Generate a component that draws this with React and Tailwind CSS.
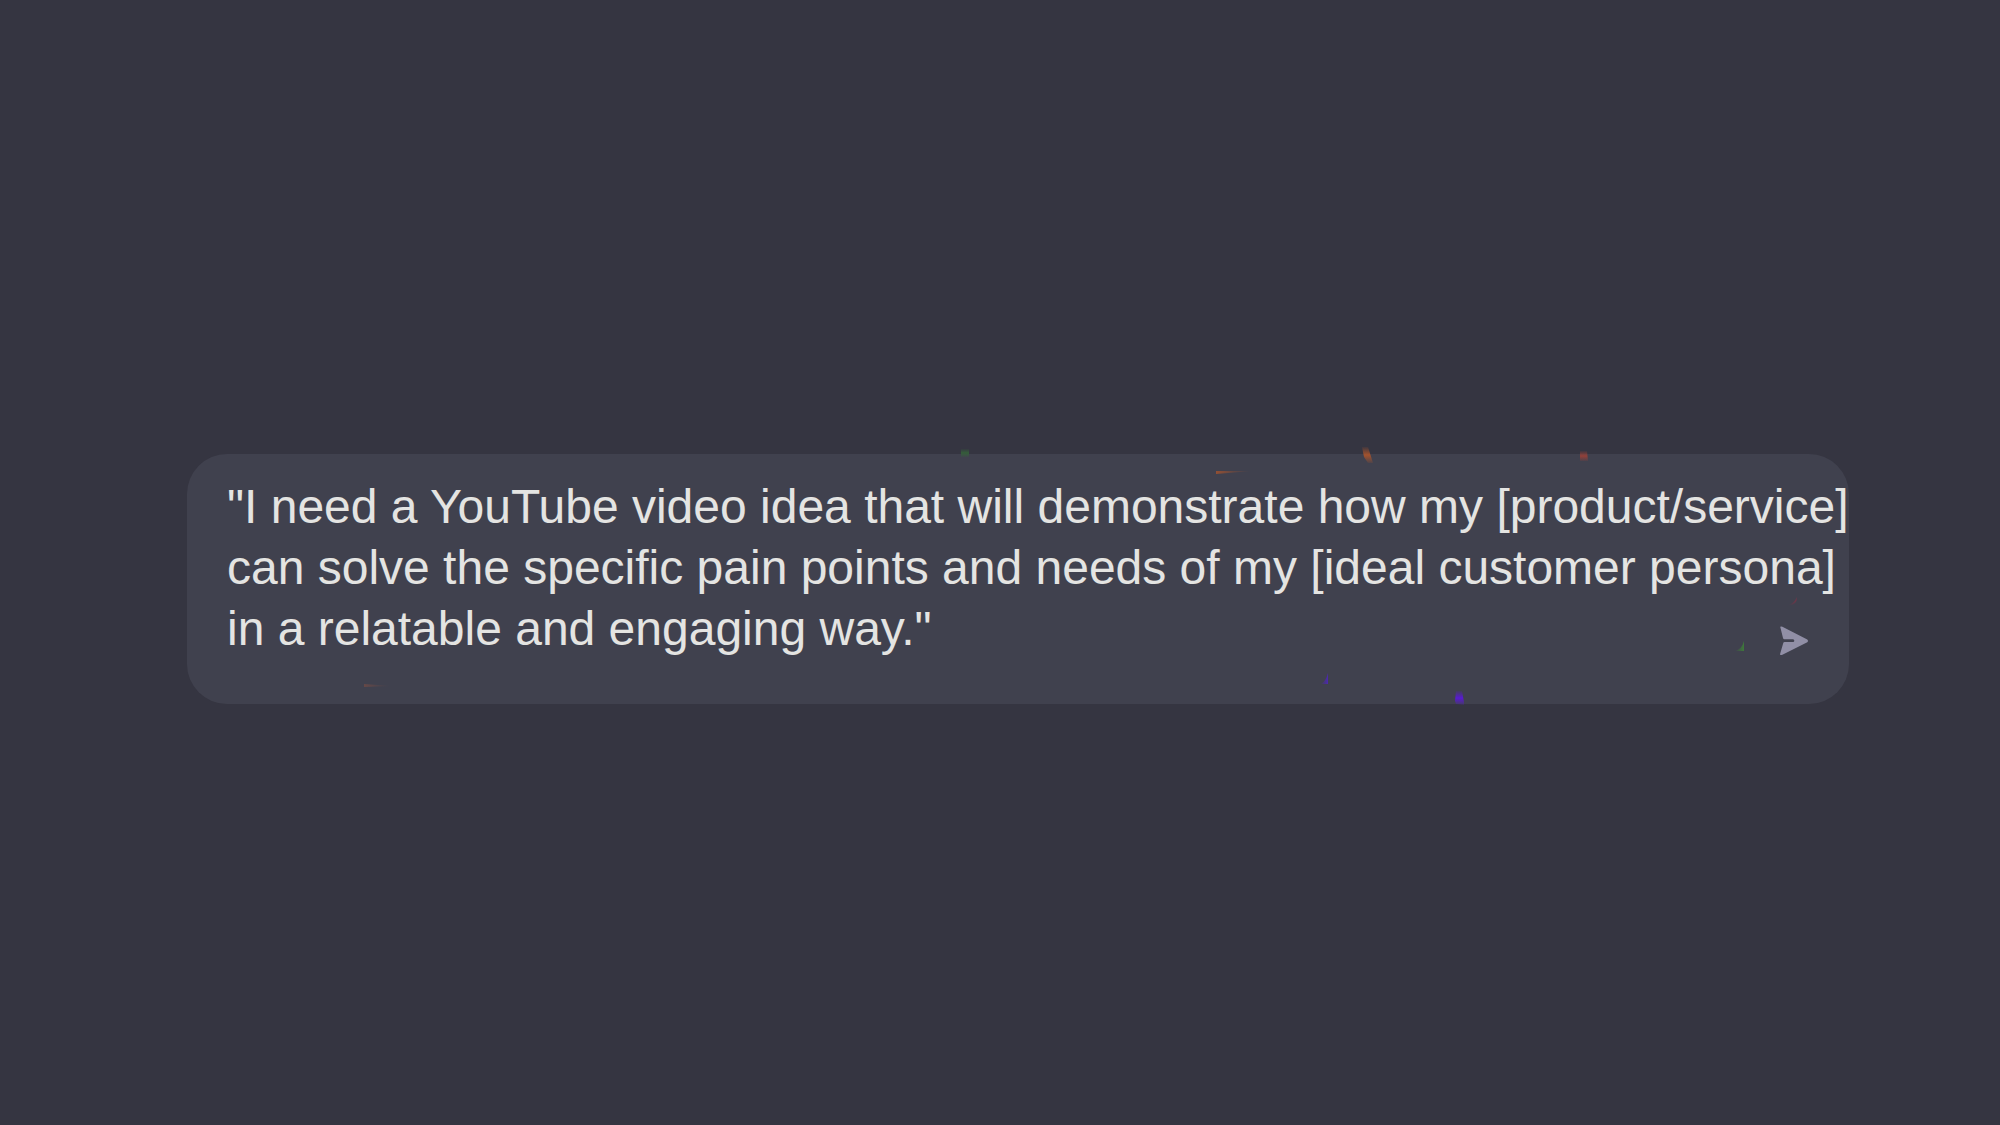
const PROMPT = `"I need a YouTube video idea that will demonstrate how my [product/service]
can solve the specific pain points and needs of my [ideal customer persona]
in a relatable and engaging way."`;

const FLECKS = [
  { id: "green-top", d: "M774 -5H782V3H774Z", color: "#35603a", fade: "both" },
  { id: "orange-top", d: "M1175 -7H1181L1186 9H1181L1177 3Z", color: "#a8532c", fade: "both" },
  { id: "red-top", d: "M1393 -3H1400L1401 7H1393Z", color: "#964038", fade: "both" },
  { id: "orange-line", d: "M1029 17H1065L1029 20Z", color: "#a8532c", fade: "right" },
  { id: "rust-line", d: "M177 230L205 232L177 233Z", color: "#704a45", fade: "right" },
  { id: "red-curve", d: "M1602 151Q1607 149 1610 143Q1610 151 1602 151Z", color: "#713447", fade: "left" },
  { id: "green-corner", d: "M1557 187V197H1548Q1555 195 1557 187Z", color: "#3e7a3a", fade: "left" },
  { id: "violet-corner", d: "M1141 219V230H1134Q1139 227 1141 219Z", color: "#4c28b0", fade: "left" },
  { id: "violet-bottom", d: "M1269 237H1275L1277 248V251L1269 250L1268 247Z", color: "#5a18d8", fade: "both" },
];

const FADES = {
  both: [0.1, 0.95, 0.15],
  right: [0.8, 0.3, 0],
  left: [0.1, 0.5, 1],
};

function Confetti() {
  return (
    <svg aria-hidden="true" className="pointer-events-none col-start-1 row-start-1 h-full w-full overflow-visible">
      {FLECKS.map(({ id, d, color, fade }) => (
        <g key={id}>
          <linearGradient id={id} x1="0" y1="0" x2={fade === "both" ? "0" : "1"} y2={fade === "both" ? "1" : "0"}>
            {FADES[fade].map((opacity, i) => (
              <stop key={i} offset={i / 2} stopColor={color} stopOpacity={opacity} />
            ))}
          </linearGradient>
          <path d={d} fill={`url(#${id})`} />
        </g>
      ))}
    </svg>
  );
}

export default function App() {
  return (
    <main className="flex min-h-screen items-center bg-[#353541] pt-[33px] pr-[151px] pl-[187px] font-['Liberation_Sans',Arial,sans-serif]">
      <form className="grid w-full rounded-[40px] bg-[#40414e]" onSubmit={(e) => e.preventDefault()}>
        <textarea
          aria-label="Prompt"
          rows={3}
          spellCheck={false}
          defaultValue={PROMPT}
          className="col-start-1 row-start-1 block w-full resize-none overflow-hidden whitespace-pre bg-transparent pt-[22px] pb-[45px] pl-10 text-[48px] leading-[61px] text-[#e4e4e2] outline-none"
        />
        <Confetti />
        <button type="submit" aria-label="Send" className="col-start-1 row-start-1 mr-10 mb-12 self-end justify-self-end text-[#918fa6]">
          <svg aria-hidden="true" viewBox="0 0 30 30" className="size-[30px]" fill="currentColor">
            <path d="M1.2 .8Q2.2 .2 3.4 .8L28.3 13.6Q30 15 28.3 16.3L3.4 28.8Q1.4 29.5 1 28.2L4.2 17.2Q4.4 16.1 5.6 16.1H14Q15.3 16 15.3 14.8T14 13.3H5.4Q4.3 13.2 4 12Z" />
          </svg>
        </button>
      </form>
    </main>
  );
}
